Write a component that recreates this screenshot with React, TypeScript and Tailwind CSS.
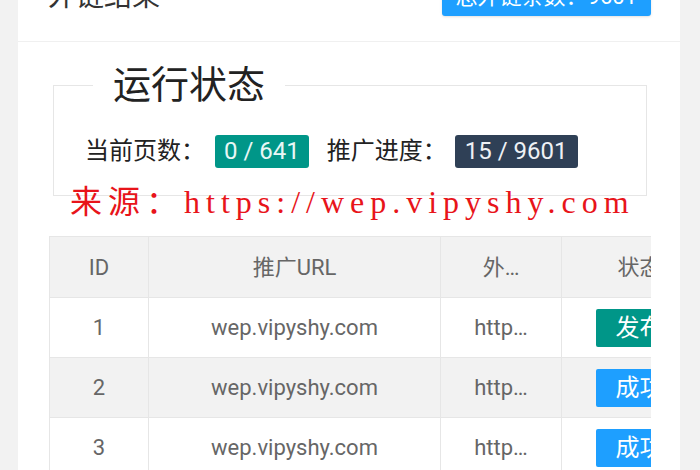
import React from 'react';

const font = { fontFamily: 'Roboto, "Noto Sans CJK SC", sans-serif' };

const rows = [
  { id: 1, url: 'wep.vipyshy.com', link: 'http…', status: '发布', tone: 'teal' },
  { id: 2, url: 'wep.vipyshy.com', link: 'http…', status: '成功', tone: 'blue' },
  { id: 3, url: 'wep.vipyshy.com', link: 'http…', status: '成功', tone: 'blue' },
];

const App = () => {
  return (
    <div className="relative h-[470px] overflow-hidden bg-[#f2f2f2] px-[18px]" style={font}>
      <div className="w-[662px] bg-white">
        <div className="-mt-[48px] flex h-[90px] items-center justify-between border-b border-[#f0f0f0] pl-[30px] pr-[29px]">
          <span className="text-[28px] text-[#333]">外链结果</span>
          <span className="flex h-[38px] items-center rounded-[3px] bg-[#1e9fff] px-[14px] text-[22px] text-white shadow-sm">
            总外链条数：9601
          </span>
        </div>

        <div className="pb-[40px] pl-[31px] pr-[29px] pt-[21px]">
          <fieldset className="mx-[4px] border border-[#e6e6e6] pb-[26px] pl-[31px] pr-[20px] pt-[26px]">
            <legend className="ml-[8px] px-[20px] text-[38px] leading-[44px] text-[#222]">运行状态</legend>
            <div className="flex items-center text-[24px] text-[#222]">
              <span>当前页数：</span>
              <span className="ml-[10px] flex h-[33px] items-center rounded-[3px] bg-[#009688] px-[9px] text-[#e8f7f5]">
                0 / 641
              </span>
              <span className="ml-[18px]">推广进度：</span>
              <span className="ml-[8px] flex h-[33px] items-center rounded-[3px] bg-[#2f4056] px-[10px] text-[#eef1f5]">
                15 / 9601
              </span>
            </div>
          </fieldset>

          <div className="mt-[40px] w-[602px] overflow-hidden">
            <table className="w-[800px] table-fixed border-collapse text-[22px] text-[#666]">
              <colgroup>
                <col className="w-[99px]" />
                <col className="w-[292px]" />
                <col className="w-[121px]" />
                <col className="w-[156px]" />
                <col className="w-[132px]" />
              </colgroup>
              <thead>
                <tr className="h-[61px] bg-[#f2f2f2]">
                  <th className="border border-[#e6e6e6] font-normal">ID</th>
                  <th className="border border-[#e6e6e6] font-normal">推广URL</th>
                  <th className="border border-[#e6e6e6] font-normal">外…</th>
                  <th className="border border-[#e6e6e6] font-normal">状态</th>
                  <th className="border border-[#e6e6e6] font-normal">操作</th>
                </tr>
              </thead>
              <tbody>
                {rows.map((r, i) => (
                  <tr key={r.id} className={i % 2 === 1 ? 'h-[60px] bg-[#f2f2f2]' : 'h-[60px] bg-white'}>
                    <td className="border border-[#e6e6e6] text-center">{r.id}</td>
                    <td className="border border-[#e6e6e6] text-center">{r.url}</td>
                    <td className="border border-[#e6e6e6] text-center">{r.link}</td>
                    <td className="border border-[#e6e6e6] text-center">
                      <span
                        className={
                          r.tone === 'teal'
                            ? 'inline-flex h-[38px] items-center rounded-[2px] bg-[#009688] px-[20px] text-[24px] text-white'
                            : 'inline-flex h-[38px] items-center rounded-[2px] bg-[#1e9fff] px-[20px] text-[24px] text-white'
                        }
                      >
                        {r.status}
                      </span>
                    </td>
                    <td className="border border-[#e6e6e6] text-center"></td>
                  </tr>
                ))}
              </tbody>
            </table>
          </div>
        </div>
      </div>

      {/* watermark laid over the page */}
      <div
        className="absolute left-[70px] top-[186px] whitespace-nowrap text-[32px] leading-none tracking-[6px] text-[#e8141a]"
        style={{ fontFamily: '"Liberation Serif", "Noto Sans CJK SC", serif' }}
      >
        来源：https://wep.vipyshy.com
      </div>
    </div>
  );
};

export default App;
